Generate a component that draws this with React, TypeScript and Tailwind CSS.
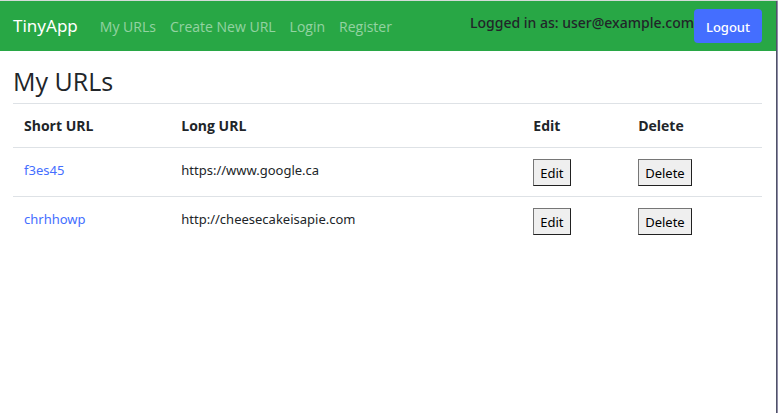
const urls = [
  { id: "f3es45", longUrl: "https://www.google.ca" },
  { id: "chrhhowp", longUrl: "http://cheesecakeisapie.com" },
];

const links = ["My URLs", "Create New URL", "Login", "Register"];

const rowButton =
  "block border border-t-[#767676] border-l-[#767676] border-r-[#212121] border-b-[#212121] bg-[#efefef] px-1.5 pt-0.5 leading-[23px] text-black";

export default function App() {
  return (
    <div className="min-h-screen border-t border-t-[#d5dbd8] bg-white font-['Noto_Sans','Open_Sans',sans-serif] text-[13px] leading-5 text-[#212529]">
      <div className="min-h-[calc(100vh-1px)] border-r border-r-[#8f8ca6]">
        <div className="min-h-[calc(100vh-1px)] border-r border-r-[#4f5368]">
          <header className="flex h-[50px] items-center bg-[#28a745] pr-3.5 pl-[13px]">
            <a href="#" className="mr-[22px] text-[17px] leading-6 text-white">
              TinyApp
            </a>
            <nav className="flex gap-3.5 pt-px font-['Open_Sans','Noto_Sans',sans-serif] text-[14px]">
              {links.map((label) => (
                <a key={label} href="#" className="whitespace-nowrap text-white/50">
                  {label}
                </a>
              ))}
            </nav>
            <form className="ml-auto flex" onSubmit={(e) => e.preventDefault()}>
              <span className="pt-1 text-[14px] font-medium whitespace-nowrap">Logged in as: user@example.com</span>
              <button type="submit" className="h-[34px] rounded bg-[#446eff] px-3 pt-px font-medium text-white">
                Logout
              </button>
            </form>
          </header>
          <main className="pt-3.5 pr-3.5 pl-[13px]">
            <h1 className="mb-1.5 font-['Open_Sans','Noto_Sans',sans-serif] text-[25px] leading-8">My URLs</h1>
            <table className="w-full table-fixed border-collapse text-left">
              <colgroup>
                <col className="w-[21%]" />
                <col className="w-[47%]" />
                <col className="w-[14%]" />
                <col className="w-[18%]" />
              </colgroup>
              <thead className="font-['Open_Sans','Noto_Sans',sans-serif] text-[14px]">
                <tr className="h-11 border-t border-[#dee2e6] font-bold">
                  <th className="px-[11px]">Short URL</th>
                  <th className="px-[11px]">Long URL</th>
                  <th className="px-[11px]">Edit</th>
                  <th className="px-[11px]">Delete</th>
                </tr>
              </thead>
              <tbody>
                {urls.map((url) => (
                  <tr key={url.id} className="h-[49px] border-t border-[#dee2e6] align-top">
                    <td className="px-[11px] pt-3">
                      <a href="#" className="text-[#446eff]">
                        {url.id}
                      </a>
                    </td>
                    <td className="px-[11px] pt-3">{url.longUrl}</td>
                    <td className="px-[11px] pt-[11px]">
                      <button type="button" className={rowButton}>
                        Edit
                      </button>
                    </td>
                    <td className="px-[11px] pt-[11px]">
                      <button type="button" className={rowButton}>
                        Delete
                      </button>
                    </td>
                  </tr>
                ))}
              </tbody>
            </table>
          </main>
        </div>
      </div>
    </div>
  );
}
